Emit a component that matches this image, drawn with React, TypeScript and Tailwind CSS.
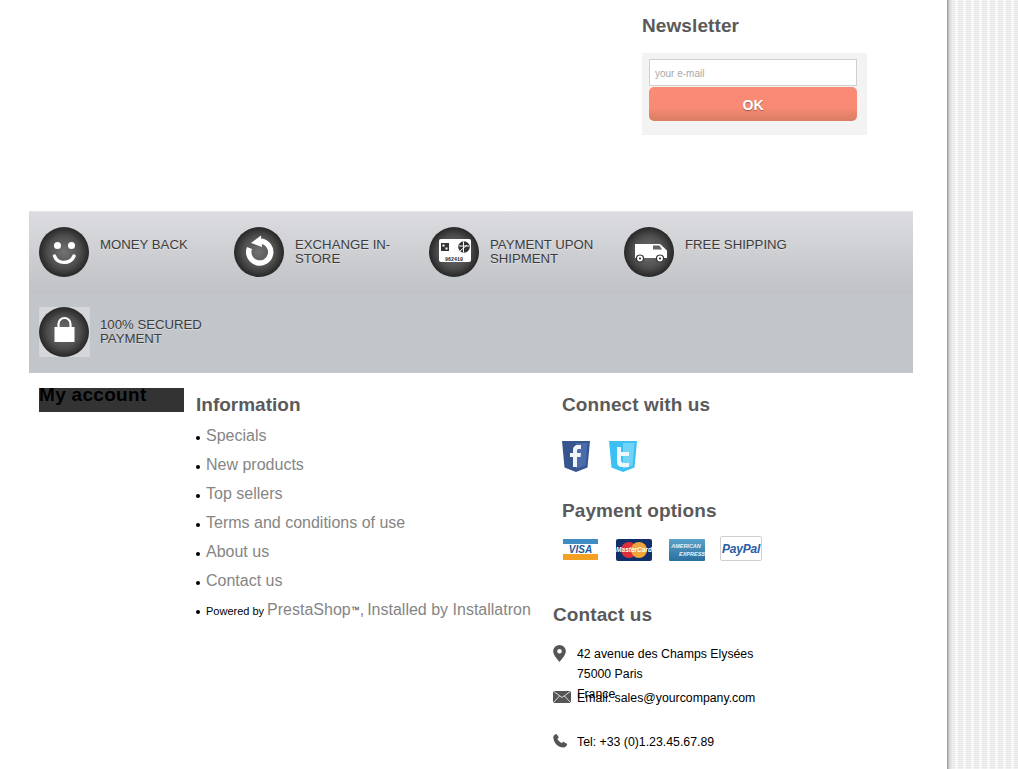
const infoLinks = ['Specials', 'New products', 'Top sellers', 'Terms and conditions of use', 'About us', 'Contact us'];

function Badge({ children }: { children: React.ReactNode }) {
  return (
    <div className="w-[50px] h-[50px] shrink-0 rounded-full bg-[radial-gradient(circle,#727272_0%,#4f4f4f_45%,#2b2b2b_68%)] flex items-center justify-center">
      {children}
    </div>
  );
}

function Smile() {
  return (
    <svg width="50" height="50" viewBox="0 0 50 50" fill="none">
      <circle cx="18.500" cy="18.500" r="3.500" fill="#fff" />
      <circle cx="32.500" cy="18.500" r="3.500" fill="#fff" />
      <path d="M15.500 29c3 8.500 16 8.500 19.500 0" stroke="#fff" strokeWidth="3.400" strokeLinecap="round" />
    </svg>
  );
}

function Exchange() {
  return (
    <svg width="50" height="50" viewBox="0 0 50 50" fill="none">
      <path d="M27 14.100A11 11 0 1 1 15.500 21" stroke="#fff" strokeWidth="5.400" />
      <path d="M17 16l10-7.500 1 11.500z" fill="#fff" />
    </svg>
  );
}

function PayCard() {
  return (
    <svg width="50" height="50" viewBox="0 0 50 50" fill="none">
      <rect x="10" y="12" width="32" height="23" rx="2" fill="#fff" />
      <rect x="12" y="16" width="8" height="8" fill="#333" />
      <path d="M13.500 17.500h2v2h-2zM16.500 20.500h2v2h-2z" fill="#fff" />
      <circle cx="35" cy="20" r="5.800" fill="#333" />
      <path d="M30 19h10M34.500 14.500v11M31 24l7-6" stroke="#fff" strokeWidth="1" />
      <text x="25" y="33.500" textAnchor="middle" fontSize="5" fontWeight="700" fill="#222" fontFamily="Liberation Mono, monospace">962410</text>
    </svg>
  );
}

function Van() {
  return (
    <svg width="50" height="50" viewBox="0 0 50 50" fill="none">
      <path d="M11 17h25l7 6.500v7.500h-32z" fill="#fff" />
      <path d="M29 18.500h6.500l2.500 4h-9z" fill="#666" />
      <circle cx="16" cy="31.500" r="3.500" fill="#fff" stroke="#333" strokeWidth="1.200" />
      <circle cx="16" cy="31.500" r="1.100" fill="#333" />
      <circle cx="36" cy="31.500" r="3.500" fill="#fff" stroke="#333" strokeWidth="1.200" />
      <circle cx="36" cy="31.500" r="1.100" fill="#333" />
    </svg>
  );
}

function Lock() {
  return (
    <svg width="50" height="50" viewBox="0 0 50 50" fill="none">
      <path d="M19.500 21v-4a6 6 0 0 1 12 0v4" stroke="#fff" strokeWidth="2.200" />
      <rect x="15.500" y="20" width="20" height="15" fill="#fff" />
    </svg>
  );
}

function Reassure({ icon, label, tile }: { icon: React.ReactNode; label: string; tile?: boolean }) {
  return (
    <div className="w-[195px] flex">
      <div className={tile ? 'w-[51px] bg-[#d6d6da]' : 'w-[50px]'}>{icon}</div>
      <p className={(tile ? 'ml-[10px]' : 'ml-[11px]') + ' mt-[11px] w-[115px] text-[13.200px] leading-[14px] text-[#3c3c3c] [text-shadow:0_1px_0_rgba(255,255,255,0.4)]'}>{label}</p>
    </div>
  );
}

function Shield({ color, light, children }: { color: string; light: string; children: React.ReactNode }) {
  return (
    <svg width="28" height="31" viewBox="0 0 28 31">
      <path d="M0 0h28l-2.500 26.500-11.500 4.500-11.500-4.500z" fill={color} />
      <path d="M14 2h11.500l-2 22.500-9.500 3.500z" fill={light} />
      {children}
    </svg>
  );
}

function Cards() {
  return (
    <div className="flex items-end h-[25px]">
      <svg width="35" height="21" viewBox="0 0 35 21" className="ml-[1px] mb-[1px]">
        <rect width="35" height="21" fill="#fff" />
        <rect width="35" height="5" fill="#3f8bc4" />
        <rect y="15" width="35" height="6" fill="#f4a023" />
        <text x="17.500" y="13.500" textAnchor="middle" fontSize="10" fontWeight="700" fontStyle="italic" fill="#1d5a9b" fontFamily="Liberation Sans, sans-serif">VISA</text>
      </svg>
      <svg width="36" height="22" viewBox="0 0 36 22" className="ml-[18px]">
        <rect width="36" height="22" rx="2" fill="#10306b" />
        <circle cx="13" cy="11" r="8" fill="#dc2f3a" />
        <circle cx="23" cy="11" r="8" fill="#f0a43a" />
        <text x="18" y="13" textAnchor="middle" fontSize="6.500" fontWeight="700" fontStyle="italic" fill="#fff" fontFamily="Liberation Sans, sans-serif">MasterCard</text>
      </svg>
      <svg width="36" height="22" viewBox="0 0 36 22" className="ml-[17px]">
        <defs>
          <linearGradient id="amex" x1="0" y1="0" x2="0" y2="1">
            <stop offset="0" stopColor="#5ba3c9" />
            <stop offset="1" stopColor="#2b6f9f" />
          </linearGradient>
        </defs>
        <rect width="36" height="22" rx="1" fill="url(#amex)" />
        <text x="17" y="9" textAnchor="middle" fontSize="5.500" fontWeight="700" fontStyle="italic" fill="#e8f2f8" fontFamily="Liberation Sans, sans-serif">AMERICAN</text>
        <text x="23" y="17" textAnchor="middle" fontSize="5.500" fontWeight="700" fontStyle="italic" fill="#e8f2f8" fontFamily="Liberation Sans, sans-serif">EXPRESS</text>
      </svg>
      <div className="ml-[15px] w-[42px] h-[25px] border border-[#cfcfcf] rounded-[2px] flex items-center justify-center text-[12px] font-bold italic text-[#2a5ba3] leading-none tracking-[-0.2px]">
        PayPal
      </div>
    </div>
  );
}

export default function App() {
  return (
    <div className="h-[769px] overflow-hidden flex bg-white font-['Liberation_Sans',Arial,sans-serif]">
      <main className="w-[947px] shrink-0 pl-[29px]">
        <section className="h-[211px] pl-[613px] pt-[15px]">
          <h4 className="text-[19px] leading-[22px] font-bold tracking-[0.1px] text-[#5a5a5a]">Newsletter</h4>
          <div className="mt-[16px] w-[225px] h-[82px] bg-[#f3f3f3] pl-[7px] pt-[6px]">
            <div className="w-[208px] h-[27px] pt-[1px] bg-white border border-[#d0d0d0] pl-[5px] flex items-center text-[10px] text-[#a8a8a8]">your e-mail</div>
            <div className="mt-[1px] pt-[2px] w-[208px] h-[34px] rounded-[5px] bg-[linear-gradient(#f98a75_0%,#f98a75_60%,#d97d63_100%)] flex items-center justify-center text-[14px] font-bold text-white [text-shadow:0_1px_1px_rgba(0,0,0,0.35)]">OK</div>
          </div>
        </section>

        <section className="w-[884px] h-[162px]">
          <div className="h-[83px] pl-[10px] pt-[15px] flex border-t border-[#e4e4e7] bg-[linear-gradient(#dcdce0,#bfc2c6)]">
            <Reassure icon={<Badge><Smile /></Badge>} label="MONEY BACK" />
            <Reassure icon={<Badge><Exchange /></Badge>} label="EXCHANGE IN-STORE" />
            <Reassure icon={<Badge><PayCard /></Badge>} label="PAYMENT UPON SHIPMENT" />
            <Reassure icon={<Badge><Van /></Badge>} label="FREE SHIPPING" />
          </div>
          <div className="h-[79px] pl-[10px] pt-[13px] bg-[#c2c5ca]">
            <Reassure tile icon={<Badge><Lock /></Badge>} label="100% SECURED PAYMENT" />
          </div>
        </section>

        <section className="flex">
          <div className="ml-[10px] mt-[15px] w-[145px] h-[24px] bg-[#333333]">
            <h4 className="text-[19px] leading-[13px] font-bold tracking-[0.3px] text-black">My account</h4>
          </div>

          <div className="ml-[12px] mt-[21px] w-[366px]">
            <h4 className="text-[19px] leading-[22px] font-bold text-[#5a5a5a]">Information</h4>
            <ul className="mt-[5px]">
              {infoLinks.map(l => (
                <li key={l} className="h-[29px] flex items-center text-[16px] text-[#858585]">
                  <span className="w-[4px] h-[4px] mt-[5px] rounded-full bg-black mr-[6px]" />
                  {l}
                </li>
              ))}
              <li className="h-[29px] flex items-center text-[16px] text-[#858585] whitespace-nowrap">
                <span className="w-[4px] h-[4px] mt-[5px] rounded-full bg-black mr-[6px]" />
                <span className="text-[11px] text-black mt-[3px] mr-[3px]">Powered by</span>
                PrestaShop<span className="text-[9px] text-[#333333] mt-[3px]">™</span><span className="mr-[3px]">,</span>Installed by Installatron
              </li>
            </ul>
          </div>

          <div className="w-[340px]">
            <div className="pt-[21px]">
              <h4 className="text-[19px] leading-[22px] font-bold tracking-[0.1px] text-[#5a5a5a]">Connect with us</h4>
              <div className="mt-[25px] flex gap-[19px]">
                <Shield color="#37558f" light="#4a6cad">
                  <path d="M11 26v-10h-3v-4h3v-3c0-3 2-5 5-5h3v4h-2c-1 0-2 .5-2 2v2h4l-.5 4h-3.500v10z" fill="#f1f4f9" />
                </Shield>
                <Shield color="#3cc0f2" light="#6fd4f7">
                  <path d="M8 6h4v5h8v4h-8v4c0 2 1 3 3 3h5v4h-7c-3 0-5-2-5-5z" fill="#eef9fe" />
                </Shield>
              </div>
              <h4 className="mt-[28px] text-[19px] leading-[22px] font-bold tracking-[0.1px] text-[#5a5a5a]">Payment options</h4>
              <div className="mt-[14px]"><Cards /></div>
            </div>

            <div className="-ml-[9px] mt-[43px] text-[12.300px] text-black">
              <h4 className="text-[19px] leading-[22px] font-bold tracking-[0.1px] text-[#5a5a5a]">Contact us</h4>
              <div className="mt-[18px] flex">
                <svg width="13" height="17" viewBox="0 0 13 17" className="mt-[1px]">
                  <path fillRule="evenodd" d="M6.500 0a6.300 6.300 0 0 1 6.300 6.300c0 3.600-4 8-6.300 10.700C4.200 14.300.2 9.900.2 6.300A6.300 6.300 0 0 1 6.500 0zm0 4a2.300 2.300 0 1 0 0 4.600 2.300 2.300 0 0 0 0-4.600z" fill="#555555" />
                </svg>
                <p className="ml-[11px] leading-[20px]">42 avenue des Champs Elysées<br />75000 Paris<br />France</p>
              </div>
              <div className="-mt-[16px] flex items-center h-[20px]">
                <svg width="18" height="12" viewBox="0 0 18 12" className="-mt-[3px]">
                  <rect width="18" height="12" fill="#555555" />
                  <path d="M0 0l9 6.500 9-6.500M0 12l6.500-7M18 12l-6.500-7" fill="none" stroke="#ffffff" strokeWidth="0.800" />
                </svg>
                <p className="ml-[6px]">Email: sales@yourcompany.com</p>
              </div>
              <div className="mt-[24px] flex items-center h-[20px]">
                <svg width="15" height="14" viewBox="0 0 15 14" className="-mt-[3px]">
                  <path d="M3.500 0l2.300 3.200-1.300 1.800c.8 1.800 2.300 3.200 4.200 4l1.700-1.200 3.800 2.300c-.4 2-1.800 3.500-3.800 3.500C5 13.600.5 8.500.3 3.500.3 1.800 1.500.5 3.500 0z" fill="#555555" />
                </svg>
                <p className="ml-[9px]">Tel: +33 (0)1.23.45.67.89</p>
              </div>
            </div>
          </div>
        </section>
      </main>

      <aside className="flex-1 bg-[linear-gradient(90deg,#8f8f8f_0px,#cfcfcf_2px,rgba(255,255,255,0)_5px),repeating-linear-gradient(0deg,rgba(255,255,255,0.35)_0px,rgba(255,255,255,0.35)_1px,rgba(255,255,255,0)_1px,rgba(255,255,255,0)_2px),repeating-linear-gradient(90deg,#f6f6f6_0px,#f6f6f6_3px,#e8e8e8_3px,#e8e8e8_8px)]" />
    </div>
  );
}
